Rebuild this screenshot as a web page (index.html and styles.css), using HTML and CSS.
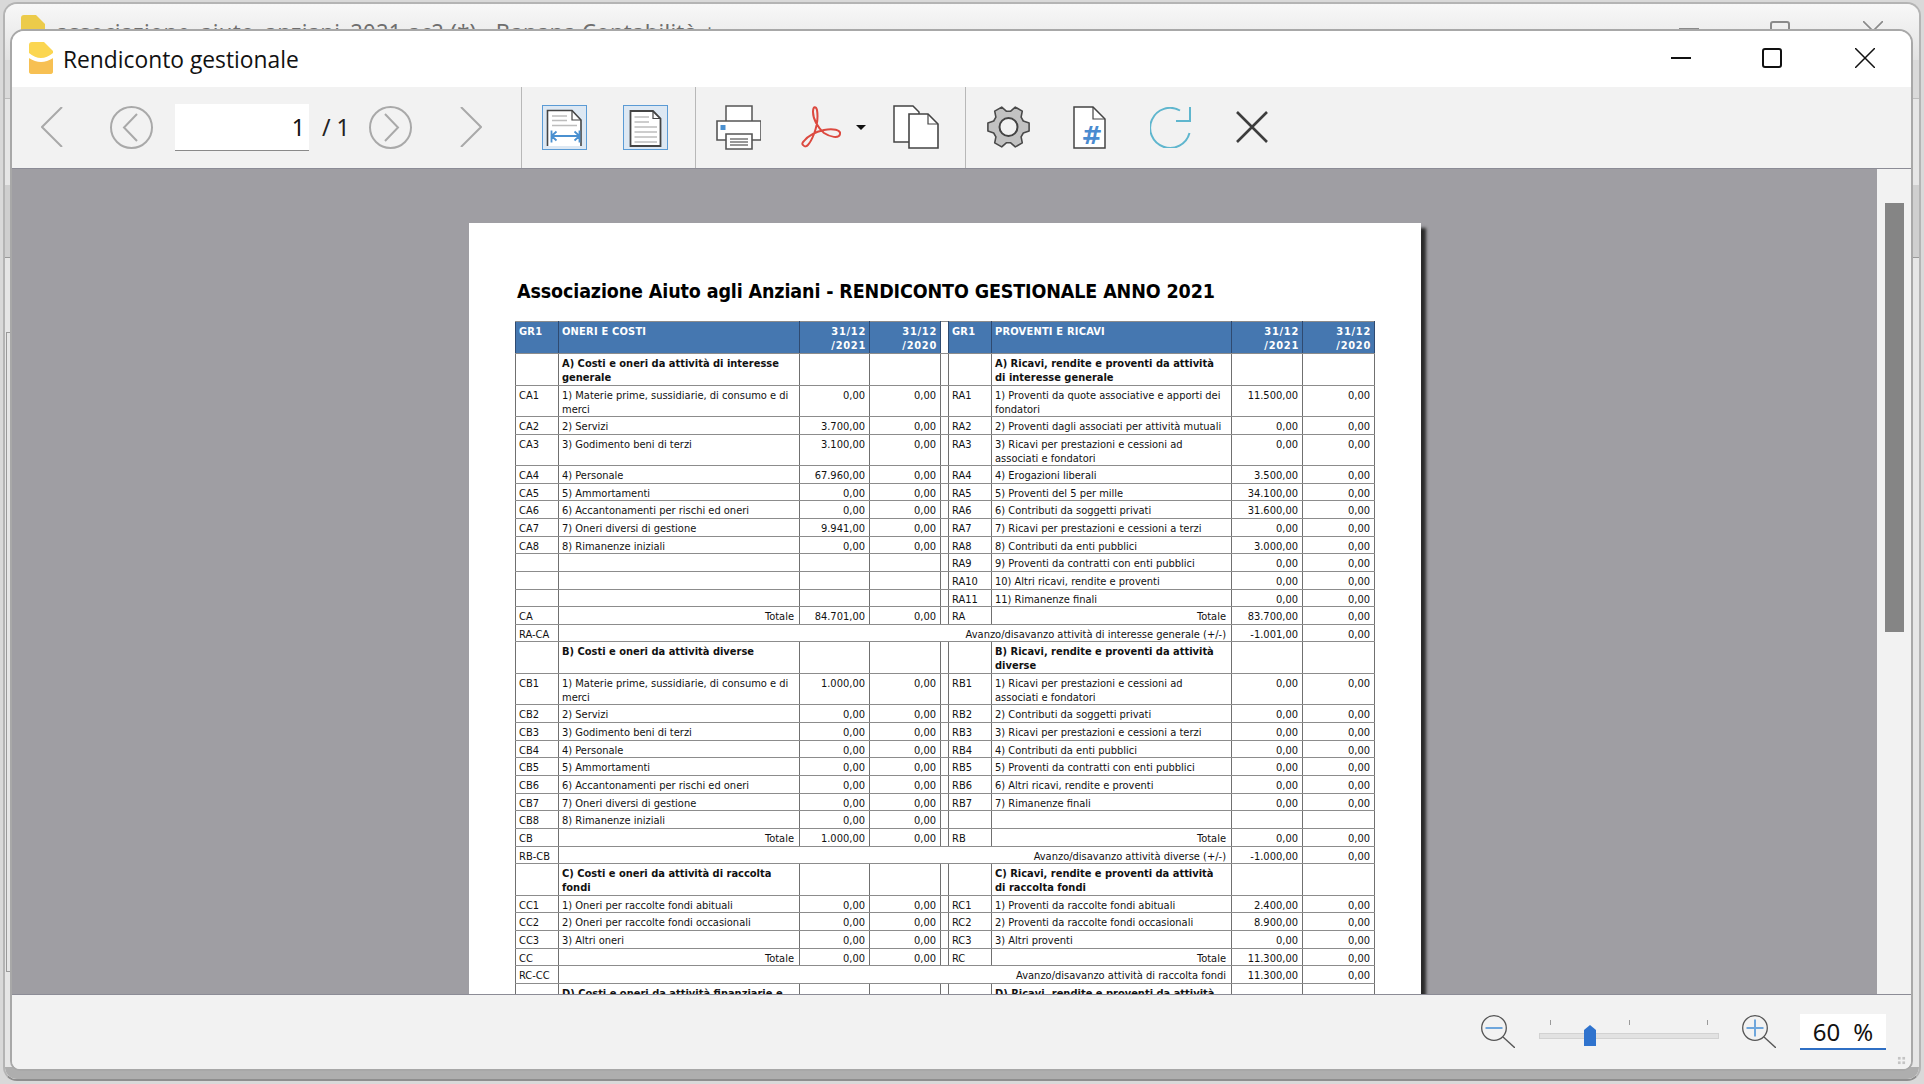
FILE: index.html
```html
<!DOCTYPE html>
<html lang="it">
<head>
<meta charset="utf-8">
<title>Rendiconto gestionale</title>
<link rel="stylesheet" href="styles.css">
</head>
<body>
<div class="desktop">
  <div class="back-window">
    <div class="back-title">
      <svg class="back-icon" viewBox="0 0 24 32"><path d="M3 0H15L24 9V29Q24 32 21 32H3Q0 32 0 29V3Q0 0 3 0Z" fill="#eccb4a"/></svg>
      <span class="back-text">associazione_aiuto_anziani_2021.ac2 (*) - Banana Contabilità +</span>
      <span class="back-min"></span>
      <span class="back-max"></span>
      <svg class="back-close" viewBox="0 0 20 20"><path d="M0 0L20 20M20 0L0 20" stroke="#8a8a8a" stroke-width="1.6"/></svg>
    </div>
    <div class="back-band-a"></div>
    <div class="back-band-b"></div>
    <div class="back-band-c"></div>
    <div class="back-band-d"></div>
    <span class="back-pane"></span>
  </div>

  <div class="window">
    <header class="titlebar">
      <svg class="app-icon" viewBox="0 0 24 32">
        <path d="M3 0H15L24 9V29Q24 32 21 32H3Q0 32 0 29V3Q0 0 3 0Z" fill="#fbd651"/>
        <path d="M0 17H24V29Q24 32 21 32H3Q0 32 0 29Z" fill="#f7c053"/>
        <path d="M0 11Q12 21 24 11V16Q12 24 0 16Z" fill="#fff"/>
      </svg>
      <span class="title-text">Rendiconto gestionale</span>
      <div class="win-controls">
        <span class="win-min"></span>
        <span class="win-max"></span>
        <svg class="win-close" viewBox="0 0 20 20"><path d="M0 0L20 20M20 0L0 20" stroke="#111" stroke-width="1.5"/></svg>
      </div>
    </header>

    <nav class="toolbar">
      <div class="tb-group tb-nav">
        <svg class="ic-chev" viewBox="0 0 22 40"><path d="M21 0L1 20L21 40" fill="none" stroke="#a9a9a9" stroke-width="2"/></svg>
        <svg class="ic-circle ml-47" viewBox="0 0 43 43"><ellipse cx="21.5" cy="21.5" rx="20.5" ry="20.5" fill="none" stroke="#a9a9a9" stroke-width="2"/><path d="M27 8L14 21.5L27 35" fill="none" stroke="#a9a9a9" stroke-width="2"/></svg>
        <div class="page-input">1</div>
        <span class="page-total">/ 1</span>
        <svg class="ic-circle ml-21" viewBox="0 0 43 43"><ellipse cx="21.5" cy="21.5" rx="20.5" ry="20.5" fill="none" stroke="#a9a9a9" stroke-width="2"/><path d="M16 8L29 21.5L16 35" fill="none" stroke="#a9a9a9" stroke-width="2"/></svg>
        <svg class="ic-chev ml-48" viewBox="0 0 22 40"><path d="M1 0L21 20L1 40" fill="none" stroke="#a9a9a9" stroke-width="2"/></svg>
      </div>
      <div class="tb-group tb-view">
        <span class="toggle">
          <svg viewBox="0 0 43 43">
            <path d="M4.500 40V4.500H29L38 14V40" fill="#fff" stroke="#444" stroke-width="1.6"/>
            <path d="M29 4.500V14H38" fill="none" stroke="#444" stroke-width="1.2"/>
            <path d="M9 10H24M9 14.500H24M9 19.500H34" stroke="#bdbdbd" stroke-width="1.5"/>
            <path d="M8.500 30H36.500M8.500 24.500V36.500M36.500 24.500V36.500M13.500 25.500L8.500 30L13.500 34.500M31.500 25.500L36.500 30L31.500 34.500" fill="none" stroke="#4a90d0" stroke-width="1.800"/>
          </svg>
        </span>
        <span class="toggle ml-36">
          <svg viewBox="0 0 43 43">
            <path d="M6.500 40V5H29L36.500 12.500V40Z" fill="#fff" stroke="#444" stroke-width="1.8"/>
            <path d="M29 5V12.500H36.500" fill="none" stroke="#444" stroke-width="1.2"/>
            <path d="M10.500 11H25M10.500 16H25M10.500 21H33M10.500 26H33M10.500 31H33M10.500 36H33" stroke="#bdbdbd" stroke-width="1.6"/>
          </svg>
        </span>
      </div>
      <div class="tb-group tb-out">
        <svg class="ic-print" viewBox="0 0 45 45">
          <path d="M10 1H36V18H10Z" fill="#fff" stroke="#555" stroke-width="1.5"/>
          <path d="M1 16H45V35H1Z" fill="#fff" stroke="#555" stroke-width="1.6"/>
          <rect x="4.500" y="20" width="5" height="5" fill="#4a90d0"/>
          <path d="M10 29H36V44H10Z" fill="#fff" stroke="#555" stroke-width="1.6"/>
          <path d="M14 34H32M14 37H32M14 40H32" stroke="#777" stroke-width="1.500"/>
        </svg>
        <svg class="ic-pdf" viewBox="0 0 41 42"><path d="M3 39C6 43 10 38 14 28C17 20 18 10 17 4C16 0 13 0 13 6C13 13 18 22 24 27C30 31 39 33 40 28C41 24 33 22 24 24C15 26 8 30 4 35C2 37 2 38 3 39Z" fill="none" stroke="#dc4a40" stroke-width="2"/></svg>
        <span class="caret"></span>
        <svg class="ic-copy" viewBox="0 0 46 44">
          <path d="M1 1H20L26 7V37H1Z" fill="#fff" stroke="#444" stroke-width="1.5"/>
          <path d="M16 9H35L45 19V43H16Z" fill="#fff" stroke="#444" stroke-width="1.6"/>
          <path d="M35 9V19H45" fill="none" stroke="#444" stroke-width="1.2"/>
        </svg>
      </div>
      <div class="tb-group tb-misc">
        <svg class="ic-gear" viewBox="0 0 45 42"><path d="M37.300 15L43.100 17V25L37.300 27L35.100 30.900L36.300 36.900L29.300 40.900L24.700 36.800H20.300L15.700 40.900L8.700 36.900L9.900 30.900L7.700 27L1.900 25V17L7.700 15L9.900 11.100L8.700 5.100L15.700 1.100L20.300 5.200H24.700L29.300 1.100L36.300 5.100L35.100 11.100Z" fill="#c2c2c2" stroke="#4a4a4a" stroke-width="1.6" stroke-linejoin="round"/><ellipse cx="22.500" cy="21" rx="9" ry="9" fill="#f2f2f2" stroke="#444" stroke-width="2"/></svg>
        <svg class="ic-hash" viewBox="0 0 33 43">
          <path d="M1 1H20L32 13V42H1Z" fill="#fff" stroke="#444" stroke-width="1.500"/>
          <path d="M20 1V13H32" fill="none" stroke="#444" stroke-width="1.2"/>
          <text class="hash-glyph" x="19" y="38" text-anchor="middle">#</text>
        </svg>
        <svg class="ic-refresh" viewBox="0 0 41 41"><path d="M30 3.500A20 20 0 1 0 39.500 26" fill="none" stroke="#5fb6ce" stroke-width="2"/><path d="M40 0V14H26" fill="none" stroke="#5fb6ce" stroke-width="2"/></svg>
        <svg class="ic-x" viewBox="0 0 32 32"><path d="M1 1L31 31M31 1L1 31" stroke="#3d3d3d" stroke-width="2.600"/></svg>
      </div>
    </nav>

    <main class="viewer">
      <div class="doc-area">
        <article class="page">
          <h1 class="report-title">Associazione Aiuto agli Anziani - RENDICONTO GESTIONALE ANNO 2021</h1>
          <table class="report">
            <colgroup>
              <col class="c-gr"><col class="c-desc1"><col class="c-a1"><col class="c-a2"><col class="c-gap"><col class="c-gr2"><col class="c-desc2"><col class="c-a3"><col class="c-a4">
            </colgroup>
            <tr class="h32 head">
              <th class="l">GR1</th><th class="l">ONERI E COSTI</th><th>31/12<br>/2021</th><th>31/12<br>/2020</th><th class="gap"></th><th class="l">GR1</th><th class="l">PROVENTI E RICAVI</th><th>31/12<br>/2021</th><th>31/12<br>/2020</th>
            </tr>
            <tr class="h32 sec"><td></td><td class="s">A) Costi e oneri da attività di interesse generale</td><td></td><td></td><td></td><td></td><td class="s">A) Ricavi, rendite e proventi da attività di interesse generale</td><td></td><td></td></tr>
            <tr class="h31"><td class="g">CA1</td><td class="d">1) Materie prime, sussidiarie, di consumo e di merci</td><td class="n">0,00</td><td class="n">0,00</td><td></td><td class="g">RA1</td><td class="d">1) Proventi da quote associative e apporti dei fondatori</td><td class="n">11.500,00</td><td class="n">0,00</td></tr>
            <tr class="h18"><td class="g">CA2</td><td class="d">2) Servizi</td><td class="n">3.700,00</td><td class="n">0,00</td><td></td><td class="g">RA2</td><td class="d">2) Proventi dagli associati per attività mutuali</td><td class="n">0,00</td><td class="n">0,00</td></tr>
            <tr class="h31"><td class="g">CA3</td><td class="d">3) Godimento beni di terzi</td><td class="n">3.100,00</td><td class="n">0,00</td><td></td><td class="g">RA3</td><td class="d">3) Ricavi per prestazioni e cessioni ad associati e fondatori</td><td class="n">0,00</td><td class="n">0,00</td></tr>
            <tr class="h18"><td class="g">CA4</td><td class="d">4) Personale</td><td class="n">67.960,00</td><td class="n">0,00</td><td></td><td class="g">RA4</td><td class="d">4) Erogazioni liberali</td><td class="n">3.500,00</td><td class="n">0,00</td></tr>
            <tr class="h17"><td class="g">CA5</td><td class="d">5) Ammortamenti</td><td class="n">0,00</td><td class="n">0,00</td><td></td><td class="g">RA5</td><td class="d">5) Proventi del 5 per mille</td><td class="n">34.100,00</td><td class="n">0,00</td></tr>
            <tr class="h18"><td class="g">CA6</td><td class="d">6) Accantonamenti per rischi ed oneri</td><td class="n">0,00</td><td class="n">0,00</td><td></td><td class="g">RA6</td><td class="d">6) Contributi da soggetti privati</td><td class="n">31.600,00</td><td class="n">0,00</td></tr>
            <tr class="h18"><td class="g">CA7</td><td class="d">7) Oneri diversi di gestione</td><td class="n">9.941,00</td><td class="n">0,00</td><td></td><td class="g">RA7</td><td class="d">7) Ricavi per prestazioni e cessioni a terzi</td><td class="n">0,00</td><td class="n">0,00</td></tr>
            <tr class="h17"><td class="g">CA8</td><td class="d">8) Rimanenze iniziali</td><td class="n">0,00</td><td class="n">0,00</td><td></td><td class="g">RA8</td><td class="d">8) Contributi da enti pubblici</td><td class="n">3.000,00</td><td class="n">0,00</td></tr>
            <tr class="h18"><td></td><td></td><td></td><td></td><td></td><td class="g">RA9</td><td class="d">9) Proventi da contratti con enti pubblici</td><td class="n">0,00</td><td class="n">0,00</td></tr>
            <tr class="h18"><td></td><td></td><td></td><td></td><td></td><td class="g">RA10</td><td class="d">10) Altri ricavi, rendite e proventi</td><td class="n">0,00</td><td class="n">0,00</td></tr>
            <tr class="h17"><td></td><td></td><td></td><td></td><td></td><td class="g">RA11</td><td class="d">11) Rimanenze finali</td><td class="n">0,00</td><td class="n">0,00</td></tr>
            <tr class="h18"><td class="g">CA</td><td class="t">Totale</td><td class="n">84.701,00</td><td class="n">0,00</td><td></td><td class="g">RA</td><td class="t">Totale</td><td class="n">83.700,00</td><td class="n">0,00</td></tr>
            <tr class="h17"><td class="g">RA-CA</td><td class="t" colspan="6">Avanzo/disavanzo attività di interesse generale (+/-)</td><td class="n">-1.001,00</td><td class="n">0,00</td></tr>
            <tr class="h32 sec"><td></td><td class="s">B) Costi e oneri da attività diverse</td><td></td><td></td><td></td><td></td><td class="s">B) Ricavi, rendite e proventi da attività diverse</td><td></td><td></td></tr>
            <tr class="h31"><td class="g">CB1</td><td class="d">1) Materie prime, sussidiarie, di consumo e di merci</td><td class="n">1.000,00</td><td class="n">0,00</td><td></td><td class="g">RB1</td><td class="d">1) Ricavi per prestazioni e cessioni ad associati e fondatori</td><td class="n">0,00</td><td class="n">0,00</td></tr>
            <tr class="h18"><td class="g">CB2</td><td class="d">2) Servizi</td><td class="n">0,00</td><td class="n">0,00</td><td></td><td class="g">RB2</td><td class="d">2) Contributi da soggetti privati</td><td class="n">0,00</td><td class="n">0,00</td></tr>
            <tr class="h18"><td class="g">CB3</td><td class="d">3) Godimento beni di terzi</td><td class="n">0,00</td><td class="n">0,00</td><td></td><td class="g">RB3</td><td class="d">3) Ricavi per prestazioni e cessioni a terzi</td><td class="n">0,00</td><td class="n">0,00</td></tr>
            <tr class="h17"><td class="g">CB4</td><td class="d">4) Personale</td><td class="n">0,00</td><td class="n">0,00</td><td></td><td class="g">RB4</td><td class="d">4) Contributi da enti pubblici</td><td class="n">0,00</td><td class="n">0,00</td></tr>
            <tr class="h18"><td class="g">CB5</td><td class="d">5) Ammortamenti</td><td class="n">0,00</td><td class="n">0,00</td><td></td><td class="g">RB5</td><td class="d">5) Proventi da contratti con enti pubblici</td><td class="n">0,00</td><td class="n">0,00</td></tr>
            <tr class="h18"><td class="g">CB6</td><td class="d">6) Accantonamenti per rischi ed oneri</td><td class="n">0,00</td><td class="n">0,00</td><td></td><td class="g">RB6</td><td class="d">6) Altri ricavi, rendite e proventi</td><td class="n">0,00</td><td class="n">0,00</td></tr>
            <tr class="h17"><td class="g">CB7</td><td class="d">7) Oneri diversi di gestione</td><td class="n">0,00</td><td class="n">0,00</td><td></td><td class="g">RB7</td><td class="d">7) Rimanenze finali</td><td class="n">0,00</td><td class="n">0,00</td></tr>
            <tr class="h18"><td class="g">CB8</td><td class="d">8) Rimanenze iniziali</td><td class="n">0,00</td><td class="n">0,00</td><td></td><td></td><td></td><td></td><td></td></tr>
            <tr class="h18"><td class="g">CB</td><td class="t">Totale</td><td class="n">1.000,00</td><td class="n">0,00</td><td></td><td class="g">RB</td><td class="t">Totale</td><td class="n">0,00</td><td class="n">0,00</td></tr>
            <tr class="h17"><td class="g">RB-CB</td><td class="t" colspan="6">Avanzo/disavanzo attività diverse (+/-)</td><td class="n">-1.000,00</td><td class="n">0,00</td></tr>
            <tr class="h32 sec"><td></td><td class="s">C) Costi e oneri da attività di raccolta fondi</td><td></td><td></td><td></td><td></td><td class="s">C) Ricavi, rendite e proventi da attività di raccolta fondi</td><td></td><td></td></tr>
            <tr class="h17"><td class="g">CC1</td><td class="d">1) Oneri per raccolte fondi abituali</td><td class="n">0,00</td><td class="n">0,00</td><td></td><td class="g">RC1</td><td class="d">1) Proventi da raccolte fondi abituali</td><td class="n">2.400,00</td><td class="n">0,00</td></tr>
            <tr class="h18"><td class="g">CC2</td><td class="d">2) Oneri per raccolte fondi occasionali</td><td class="n">0,00</td><td class="n">0,00</td><td></td><td class="g">RC2</td><td class="d">2) Proventi da raccolte fondi occasionali</td><td class="n">8.900,00</td><td class="n">0,00</td></tr>
            <tr class="h18"><td class="g">CC3</td><td class="d">3) Altri oneri</td><td class="n">0,00</td><td class="n">0,00</td><td></td><td class="g">RC3</td><td class="d">3) Altri proventi</td><td class="n">0,00</td><td class="n">0,00</td></tr>
            <tr class="h17"><td class="g">CC</td><td class="t">Totale</td><td class="n">0,00</td><td class="n">0,00</td><td></td><td class="g">RC</td><td class="t">Totale</td><td class="n">11.300,00</td><td class="n">0,00</td></tr>
            <tr class="h18"><td class="g">RC-CC</td><td class="t" colspan="6">Avanzo/disavanzo attività di raccolta fondi</td><td class="n">11.300,00</td><td class="n">0,00</td></tr>
            <tr class="h32 sec"><td></td><td class="s">D) Costi e oneri da attività finanziarie e patrimoniali</td><td></td><td></td><td></td><td></td><td class="s">D) Ricavi, rendite e proventi da attività finanziarie e patrimoniali</td><td></td><td></td></tr>
          </table>
        </article>
      </div>
      <div class="scrollbar"><span class="scroll-thumb"></span></div>
    </main>

    <footer class="statusbar">
      <svg class="ic-zoom" viewBox="0 0 34 33"><circle cx="13" cy="13" r="12.300" fill="none" stroke="#555" stroke-width="1.300"/><path d="M4.500 13H21.500" stroke="#6ea6dc" stroke-width="2"/><path d="M22 22L34 33" stroke="#555" stroke-width="1.300"/></svg>
      <div class="slider">
        <div class="ticks"><i></i><i></i><i></i></div>
        <div class="track"></div>
        <svg class="thumb" viewBox="0 0 12 21"><path d="M0 21V5L6 0L12 5V21Z" fill="#2f73ce"/></svg>
      </div>
      <svg class="ic-zoom ic-zoom-plus" viewBox="0 0 34 33"><circle cx="13" cy="13" r="12.300" fill="none" stroke="#555" stroke-width="1.300"/><path d="M4.500 13H21.500M13 4.500V21.500" stroke="#6ea6dc" stroke-width="2"/><path d="M22 22L34 33" stroke="#555" stroke-width="1.300"/></svg>
      <div class="zoom-input"><span>60</span><span>%</span></div>
      <span class="grip"></span>
    </footer>
  </div>
</div>
</body>
</html>
```
FILE: styles.css
```css
* { box-sizing: border-box; }
html, body { margin: 0; padding: 0; overflow: hidden; }
body { width: 1924px; height: 1084px; background: #e4e4e4; font-family: "Noto Sans", sans-serif; }
svg { display: block; flex: none; }

.desktop { position: relative; width: 1924px; height: 1084px; overflow: hidden; background: #d9d9d9; }

/* window behind */
.back-window {
  position: absolute; left: 3px; top: 2px; width: 1918px; height: 1079px;
  border: 2px solid #b4b4b4; border-bottom-color: #8e8e8e; border-radius: 14px;
  display: flex; flex-direction: column; overflow: hidden; background: #e6e6e6;
}
.back-title {
  height: 56px; display: flex; align-items: flex-start; flex: none;
  background: linear-gradient(#f8f8f8, #e2e2e2);
  color: #6e6e6e; position: relative;
}
.back-icon { width: 24px; height: 32px; margin: 11px 0 0 16px; }
.back-text { margin: 12px 0 0 11px; font-size: 22px; line-height: 30px; letter-spacing: 0.29px; white-space: nowrap; }
.back-min { position: absolute; left: 1674px; top: 24px; width: 20px; height: 2px; background: #8a8a8a; }
.back-max { position: absolute; left: 1765px; top: 17px; width: 20px; height: 24px; border: 2px solid #8a8a8a; border-radius: 3px; }
.back-close { position: absolute; left: 1858px; top: 17px; width: 20px; height: 20px; }
.back-band-a { height: 39px; background: #dadada; border-bottom: 1px solid #bdbdbd; flex: none; }
.back-band-b { height: 86px; background: #e6e6e6; flex: none; }
.back-band-c { height: 73px; background: #cfcfcf; flex: none; border-bottom: 1px solid #9a9a9a; }
.back-band-d { flex: 1; background: #e6e6e6; border-bottom: 12px solid #aeaeae; }
.back-pane { position: absolute; left: 1px; top: 328px; width: 12px; height: 640px; border: 1px solid #9a9a9a; }

/* front window */
.window {
  position: absolute; left: 10px; top: 29px; width: 1903px; height: 1042px;
  border: 2px solid #a8a8a8; border-radius: 14px 14px 10px 10px;
  display: flex; flex-direction: column; overflow: hidden; background: #f2f2f2;
}
.titlebar { height: 56px; flex: none; background: #fff; display: flex; align-items: center; padding: 0 0 2px 17px; }
.app-icon { width: 24px; height: 32px; }
.title-text { margin: 2px 0 0 10px; font-family: "Open Sans", sans-serif; font-size: 22.8px; color: #111; white-space: nowrap; }
.win-controls { margin-left: auto; display: flex; align-items: center; padding-right: 36px; }
.win-min { width: 20px; height: 2px; background: #111; }
.win-max { width: 20px; height: 20px; margin-left: 71px; border: 2px solid #111; border-radius: 3px; }
.win-close { width: 20px; height: 20px; margin-left: 73px; }

.toolbar {
  height: 82px; flex: none; display: flex; background: #f2f2f2; border-bottom: 1px solid #8c8c96;
}
.tb-group { height: 81px; display: flex; align-items: center; flex: none; padding-bottom: 1px; }
.tb-nav { width: 509px; padding-left: 29px; }
.tb-view { width: 174px; padding-left: 20px; border-left: 1px solid #b8b8b8; }
.tb-out { width: 270px; padding-left: 20px; border-left: 1px solid #b8b8b8; }
.tb-misc { padding-left: 20px; border-left: 1px solid #b8b8b8; }

.ic-chev { width: 22px; height: 40px; }
.ic-circle { width: 43px; height: 43px; }
.ml-47 { margin-left: 47px; }
.ml-21 { margin-left: 21px; }
.ml-48 { margin-left: 48px; }
.ml-36 { margin-left: 36px; }
.page-input {
  width: 134px; height: 47px; margin-left: 22px; background: #fff; border-bottom: 1px solid #8a8a8a;
  font-size: 23px; line-height: 46px; text-align: right; padding-right: 4px; color: #111;
}
.page-total { margin-left: 13px; width: 26px; font-size: 23px; color: #222; white-space: nowrap; }
.toggle { width: 45px; height: 45px; background: #dde8f3; border: 1px solid #5b9bd5; display: block; }
.toggle svg { width: 43px; height: 43px; }
.ic-print { width: 45px; height: 45px; }
.ic-pdf { width: 41px; height: 42px; margin-left: 39px; }
.caret { width: 0; height: 0; margin-left: 15px; border-left: 5px solid transparent; border-right: 5px solid transparent; border-top: 5px solid #111; }
.ic-copy { width: 46px; height: 44px; margin-left: 27px; }
.ic-gear { width: 45px; height: 42px; }
.ic-hash { width: 33px; height: 43px; margin-left: 42px; }
.hash-glyph { font-family: "DejaVu Sans", sans-serif; font-weight: 700; font-size: 25px; fill: #4a8bd0; }
.ic-refresh { width: 41px; height: 41px; margin-left: 44px; }
.ic-x { width: 32px; height: 32px; margin-left: 45px; }

.viewer { flex: 1; min-height: 0; display: flex; }
.doc-area { flex: 1; min-width: 0; background: #9f9ea3; overflow: hidden; padding: 54px 0 0 457px; }
.scrollbar { width: 34px; flex: none; background: #f2f2f2; padding: 34px 7px 0 8px; }
.scroll-thumb { display: block; width: 19px; height: 429px; background: #858585; }

.page {
  width: 952px; background: #fff; padding: 54px 0 60px 46px;
  box-shadow: 5px 5px 3px #2a2a2a;
}
.report-title {
  margin: 0 0 14px 2px; font-family: "DejaVu Sans", sans-serif; font-size: 19.5px; line-height: 30px; font-weight: 700;
  font-stretch: condensed; letter-spacing: -0.13px; color: #000; white-space: nowrap;
}
.report {
  width: 859px; table-layout: fixed; border-collapse: collapse;
  font-family: "DejaVu Sans", sans-serif; font-stretch: condensed; font-size: 11px; color: #111;
}
.c-gr { width: 43px; }
.c-desc1 { width: 241px; }
.c-a1 { width: 70px; }
.c-a2 { width: 71px; }
.c-gap { width: 8px; }
.c-gr2 { width: 43px; }
.c-desc2 { width: 240px; }
.c-a3 { width: 71px; }
.c-a4 { width: 72px; }
.report td, .report th { border: 1px solid #8c8c8c; padding: 3px 4px 0 3px; vertical-align: top; overflow: hidden; line-height: 13.5px; }
.report td { border-left-color: #707070; border-right-color: #707070; }
.h32 { height: 32px; }
.h31 { height: 31px; }
.h18 { height: 18px; }
.h17 { height: 17px; }
.report .h18 td, .report .h17 td { padding-top: 4px; line-height: 12px; }
.head th {
  background: #4577b0; color: #fff; font-weight: 700; text-align: right; font-size: 11px;
  border-color: #8c8c8c #2f4a70; letter-spacing: 0.7px;
}
.report .head th { padding-right: 3px; }
.head .l { text-align: left; letter-spacing: 0.2px; }
.head .gap { background: #fff; }
.report .s { font-weight: 700; padding-left: 3px; padding-right: 9px; }
.report .d { padding-left: 3px; padding-right: 3px; }
.report .g { padding-left: 3px; }
.report .n { text-align: right; }
.report .t { text-align: right; padding-right: 5px; }

.statusbar {
  flex: none; height: 75px; background: #f2f2f2; border-top: 1px solid #8c8c96;
  display: flex; align-items: flex-start; position: relative; padding-left: 1469px;
}
.ic-zoom { width: 34px; height: 33px; margin-top: 20px; }
.ic-zoom-plus { margin-left: 23px; }
.slider { position: relative; width: 180px; margin: 25px 0 0 24px; height: 27px; }
.ticks { display: flex; justify-content: space-between; padding: 0 11px; height: 5px; }
.ticks i { display: block; width: 1px; height: 5px; background: #9a9a9a; }
.track { margin-top: 8px; height: 4px; background: #e2e2e2; border: 1px solid #d2d2d2; box-sizing: content-box; }
.thumb { position: absolute; left: 45px; top: 5px; width: 12px; height: 21px; }
.zoom-input {
  width: 86px; height: 36px; margin: 19px 0 0 24px; background: #fff; border-bottom: 2px solid #2f6fc4;
  display: flex; justify-content: center; gap: 13px; font-size: 24px; line-height: 35px; color: #111;
}
.grip {
  position: absolute; right: 5px; bottom: 4px; width: 9px; height: 9px;
  background: radial-gradient(circle, #c4c4c4 1.4px, transparent 1.6px) 0 0 / 4.5px 4.5px;
}
```
